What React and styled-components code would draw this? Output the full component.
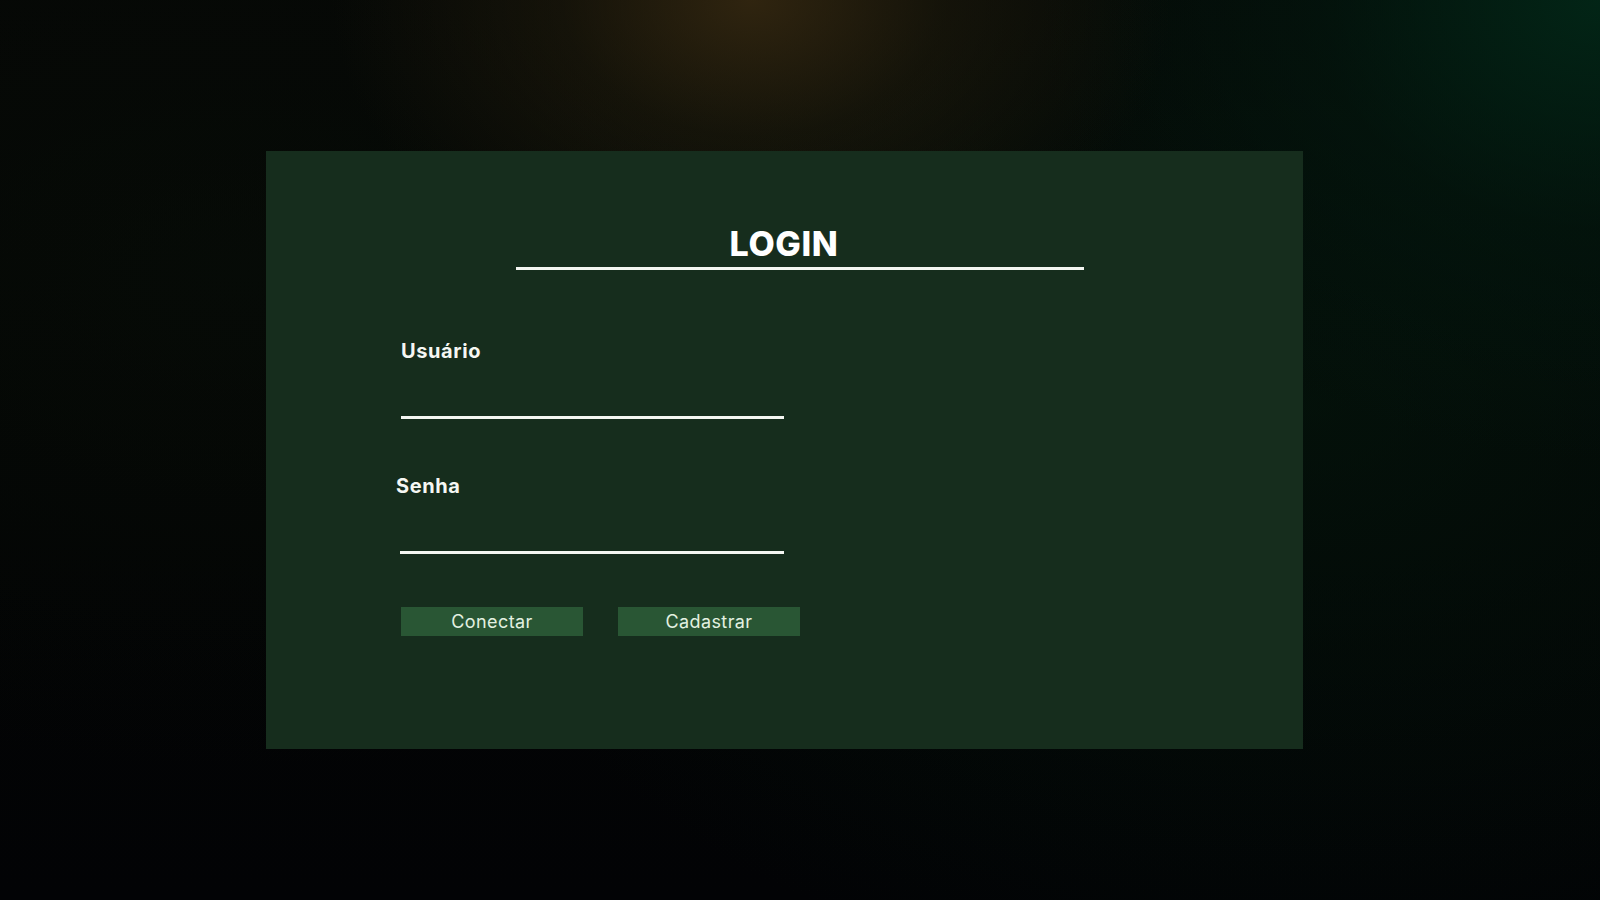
import React from "react";
import styled, { createGlobalStyle } from "styled-components";

const Global = createGlobalStyle`
  * { box-sizing: border-box; }
  html, body { margin: 0; padding: 0; }
  body {
    font-family: Inter, "Noto Sans", Arial, sans-serif;
    background: #030405;
  }
`;

const Page = styled.main`
  width: 100%;
  min-height: 100vh;
  display: flex;
  align-items: flex-start;
  padding: 151px 0 0 266px;
  background:
    radial-gradient(ellipse 420px 300px at 47% 0%, rgba(50, 38, 16, 0.95), rgba(36, 30, 13, 0.5) 45%, rgba(0, 0, 0, 0) 100%),
    radial-gradient(ellipse 560px 460px at 100% 0%, rgba(2, 40, 24, 0.9), rgba(2, 26, 16, 0.5) 50%, rgba(0, 0, 0, 0) 100%),
    radial-gradient(ellipse 900px 600px at 82% 45%, rgba(4, 28, 15, 0.5), rgba(0, 0, 0, 0) 100%),
    radial-gradient(ellipse 800px 500px at 15% 30%, rgba(8, 16, 8, 0.5), rgba(0, 0, 0, 0) 100%),
    linear-gradient(180deg, #050605 0%, #030404 60%, #020305 100%);
`;

const Card = styled.section`
  width: 1037px;
  height: 598px;
  background: #162d1d;
  padding: 73px 0 0 0;
  display: flex;
  flex-direction: column;
`;

const Title = styled.h1`
  margin: 0 0 0 250px;
  width: 568px;
  padding: 0 32px 3px 0;
  text-align: center;
  font-family: Inter, sans-serif;
  font-weight: 800;
  font-size: 34px;
  line-height: 40px;
  letter-spacing: 0.6px;
  color: #ffffff;
  border-bottom: 3px solid #f4f6f2;
`;

const Form = styled.form`
  margin: 67px 0 0 0;
  display: flex;
  flex-direction: column;
`;

const Field = styled.div`
  display: flex;
  flex-direction: column;
  margin-left: ${(p) => p.$indent}px;
  width: ${(p) => 518 - p.$indent}px;
  margin-bottom: ${(p) => p.$gap}px;
`;

const Label = styled.label`
  display: block;
  margin: 2px 0 13px ${(p) => p.$shift || 0}px;
  font-family: Inter, sans-serif;
  font-weight: 700;
  font-size: 20px;
  line-height: 24px;
  letter-spacing: 0.6px;
  color: #f5f7f3;
`;

const Input = styled.input`
  display: block;
  width: 100%;
  height: 43px;
  border: none;
  border-bottom: 3px solid #f4f6f2;
  background: transparent;
  outline: none;
  color: #ffffff;
  font-family: Inter, sans-serif;
  font-size: 18px;
  padding: 0 4px;
`;

const Actions = styled.div`
  display: flex;
  gap: 35px;
  margin-left: 135px;
`;

const Button = styled.button`
  width: 182px;
  height: 29px;
  border: none;
  background: #295634;
  color: #e3f1e1;
  font-family: Inter, sans-serif;
  font-weight: 400;
  font-size: 18px;
  line-height: 29px;
  letter-spacing: 0.4px;
  padding: 0;
  cursor: pointer;
`;

export default function App() {
  return (
    <>
      <Global />
      <Page>
        <Card>
          <Title>LOGIN</Title>
          <Form onSubmit={(e) => e.preventDefault()}>
            <Field $indent={135} $gap={53}>
              <Label htmlFor="usuario">Usuário</Label>
              <Input id="usuario" type="text" />
            </Field>
            <Field $indent={134} $gap={53}>
              <Label htmlFor="senha" $shift={-4}>Senha</Label>
              <Input id="senha" type="password" />
            </Field>
            <Actions>
              <Button type="submit">Conectar</Button>
              <Button type="button">Cadastrar</Button>
            </Actions>
          </Form>
        </Card>
      </Page>
    </>
  );
}
